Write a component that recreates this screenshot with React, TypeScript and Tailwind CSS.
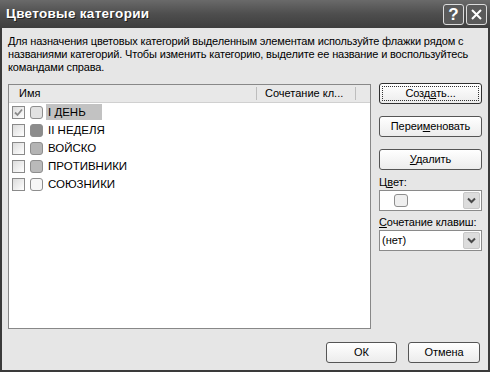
const rows = [
  { name: "I ДЕНЬ", checked: true, color: "bg-[#e2e2e2]", selected: true },
  { name: "II НЕДЕЛЯ", checked: false, color: "bg-[#8c8c8c]", selected: false },
  { name: "ВОЙСКО", checked: false, color: "bg-[#b4b4b4]", selected: false },
  { name: "ПРОТИВНИКИ", checked: false, color: "bg-[#bababa]", selected: false },
  { name: "СОЮЗНИКИ", checked: false, color: "bg-[#f6f6f6]", selected: false },
];

const Chevron = () => (
  <svg width="9" height="7" viewBox="0 0 9 7">
    <path d="M1 1.5 L4.5 5 L8 1.5" fill="none" stroke="#4a4a4a" strokeWidth="2" />
  </svg>
);

const Button = ({ children, isDefault = false }: { children: React.ReactNode; isDefault?: boolean }) => (
  <button
    className={`h-[21px] w-full rounded-[3px] border bg-gradient-to-b from-white to-[#ececec] text-[11px] tracking-[-0.1px] text-black ${
      isDefault ? "border-[#303030] p-[2px]" : "border-[#555]"
    }`}
  >
    {isDefault ? (
      <span className="flex h-full w-full items-center justify-center border border-dotted border-[#333]">
        {children}
      </span>
    ) : (
      children
    )}
  </button>
);

const Dropdown = ({ children }: { children: React.ReactNode }) => (
  <div className="flex h-[21px] w-[103px] items-center border border-[#8a8a8a] bg-white">
    <div className="flex flex-1 items-center pl-[2px] text-[11px]">{children}</div>
    <div className="m-[1px] flex h-[17px] w-[17px] items-center justify-center rounded-[2px] border border-[#c8c8c8] bg-[#dcdcdc]">
      <Chevron />
    </div>
  </div>
);

export default function App() {
  return (
    <div
      className="flex h-[372px] w-[490px] flex-col bg-[#e6e6e6] text-black"
      style={{ fontFamily: '"Liberation Sans", Arial, sans-serif' }}
    >
      {/* title bar */}
      <div className="flex h-[28px] items-center justify-between bg-gradient-to-b from-[#6a6a6a] via-[#4e4e4e] to-[#3e3e3e] pl-[6px] pr-[3px]">
        <span className="text-[13.5px] font-bold tracking-[0.3px] text-white [text-shadow:1px_1px_0_#222]">
          Цветовые категории
        </span>
        <div className="flex gap-[2px]">
          <div className="flex h-[21px] w-[21px] items-center justify-center rounded-[3px] border border-[#dcdcdc] bg-[#5a5a5a] text-[17px] font-bold leading-none text-white">
            ?
          </div>
          <div className="flex h-[21px] w-[21px] items-center justify-center rounded-[3px] border border-[#dcdcdc] bg-[#5a5a5a]">
            <svg width="13" height="13" viewBox="0 0 13 13">
              <path d="M2 2 L11 11 M11 2 L2 11" stroke="white" strokeWidth="2" />
            </svg>
          </div>
        </div>
      </div>

      {/* body */}
      <div className="flex flex-1 flex-col border-x-2 border-b-2 border-[#3a3a3a] px-[6px]">
        <p className="mt-[7px] text-[11px] leading-[13px] tracking-[-0.15px]">
          Для назначения цветовых категорий выделенным элементам используйте флажки рядом с названиями категорий. Чтобы изменить категорию, выделите ее название и воспользуйтесь командами справа.
        </p>

        <div className="mt-[10px] flex gap-[8px]">
          {/* list */}
          <div className="flex h-[245px] w-[364px] flex-col border border-[#888] bg-white">
            <div className="flex h-[18px] items-center border-b border-[#d0d0d0] bg-[#e8e8e8] text-[11px]">
              <div className="w-[247px] pl-[10px]">Имя</div>
              <div className="h-[13px] w-px bg-[#bdbdbd]" />
              <div className="w-[98px] pl-[8px]">Сочетание кл...</div>
              <div className="h-[13px] w-px bg-[#bdbdbd]" />
            </div>
            {rows.map((r) => (
              <div key={r.name} className="flex h-[18px] items-center pl-[3px]">
                <div className="flex h-[13px] w-[13px] items-center justify-center border border-[#8a8a8a] bg-gradient-to-br from-[#dcdcdc] to-white">
                  {r.checked && (
                    <svg width="9" height="9" viewBox="0 0 9 9">
                      <path d="M1 4.5 L3.5 7 L8 1.5" fill="none" stroke="#8a8a8a" strokeWidth="1.8" />
                    </svg>
                  )}
                </div>
                <div className={`ml-[5px] h-[13px] w-[13px] rounded-[3px] border border-[#8e8e8e] ${r.color}`} />
                <div
                  className={`ml-[3px] px-[2px] text-[11.5px] leading-[16px] ${r.selected ? "bg-[#c2c2c2] pr-[16px]" : ""}`}
                >
                  {r.name}
                </div>
              </div>
            ))}
          </div>

          {/* right column */}
          <div className="-mt-[1px] flex w-[103px] flex-col">
            <Button isDefault>
              Созд<u>а</u>ть...
            </Button>
            <div className="mt-[9px]">
              <Button>
                Переи<u>м</u>еновать
              </Button>
            </div>
            <div className="mt-[9px]">
              <Button>
                <u>У</u>далить
              </Button>
            </div>
            <div className="mt-[5px] text-[11px] leading-[14px]">
              Ц<u>в</u>ет:
            </div>
            <div className="mt-[1px]">
              <Dropdown>
                <div className="ml-[12px] h-[13px] w-[14px] rounded-[3px] border border-[#8e8e8e] bg-[#efefef]" />
              </Dropdown>
            </div>
            <div className="mt-[4px] whitespace-nowrap text-[11px] leading-[14px] tracking-[-0.1px]">
              <u>С</u>очетание клавиш:
            </div>
            <div className="mt-[1px]">
              <Dropdown>(нет)</Dropdown>
            </div>
          </div>
        </div>

        <div className="mt-[10px] flex justify-end gap-[11px] pr-[2px]">
          <div className="w-[71px]">
            <Button>ОК</Button>
          </div>
          <div className="w-[72px]">
            <Button>Отмена</Button>
          </div>
        </div>
      </div>
    </div>
  );
}
